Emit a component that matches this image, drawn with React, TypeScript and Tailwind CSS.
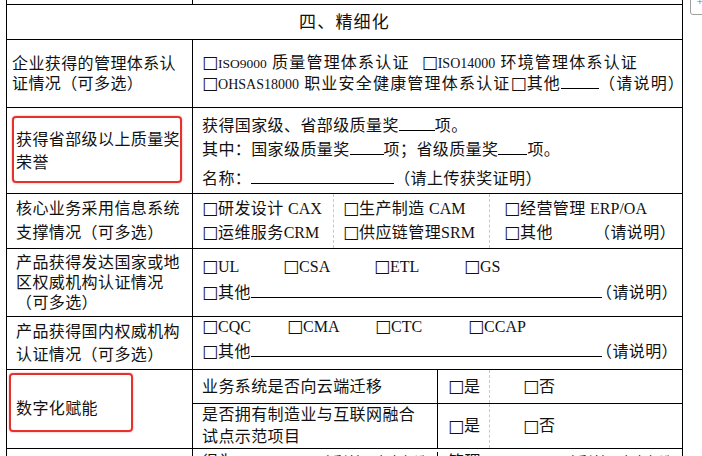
import React from "react";

const Box = () => (
  <span className="font-['DejaVu_Sans',sans-serif] text-[17px] leading-none tracking-normal">□</span>
);
const L = ({ children, className = "" }: { children: React.ReactNode; className?: string }) => (
  <span className={"tracking-normal " + className}>{children}</span>
);
const Blank = ({ className }: { className: string }) => (
  <span className={"inline-block border-b border-black align-baseline " + className} />
);
const RedBox = ({ className }: { className: string }) => (
  <div
    className={
      "pointer-events-none absolute rounded-[4px] border-2 border-[#e5322d] shadow-[0_0_2px_rgba(229,50,45,0.5)] " +
      className
    }
  />
);

export default function App() {
  return (
    <div className="relative h-[456px] w-[702px] overflow-hidden bg-white font-['Liberation_Serif','Noto_Sans_CJK_SC',serif] text-[16px] tracking-[0.4px] text-[#111]">
      <div className="ml-[6px] w-[677px] border-x border-black">
        {/* row0 */}
        <div className="flex h-[5px] border-b border-black">
          <div className="w-[186px] shrink-0 border-r border-black" />
        </div>
        {/* header */}
        <div className="flex h-[35px] items-center justify-center border-b border-black text-[17px] leading-none tracking-[1.2px]">
          四、精细化
        </div>
        {/* row1 */}
        <div className="flex h-[68px] border-b border-black">
          <div className="flex w-[186px] shrink-0 flex-col justify-center border-r border-black pl-[5px] leading-[20px]">
            <div>企业获得的管理体系认</div>
            <div>证情况（可多选）</div>
          </div>
          <div className="flex flex-1 flex-col justify-center whitespace-nowrap pl-[9px] leading-[20px] tracking-[1.2px]">
            <div>
              <Box />
              <L className="text-[13.5px]">ISO9000</L> 质量管理体系认证
              <span className="ml-[12px]">
                <Box />
              </span>
              <L className="text-[14px]">ISO14000</L> 环境管理体系认证
            </div>
            <div>
              <Box />
              <L className="text-[14px]">OHSAS18000</L> 职业安全健康管理体系认证
              <Box />
              其他
              <Blank className="w-[38px]" />
              （请说明）
            </div>
          </div>
        </div>
        {/* row2 */}
        <div className="flex h-[86px] border-b border-black">
          <div className="relative flex w-[186px] shrink-0 flex-col justify-center border-r border-black pl-[9px] leading-[23px]">
            <div>获得省部级以上质量奖</div>
            <div>荣誉</div>
            <RedBox className="left-[5px] top-[8px] h-[67px] w-[170px]" />
          </div>
          <div className="flex-1 whitespace-nowrap pl-[9px] pt-[6px] leading-[24px]">
            <div>
              获得国家级、省部级质量奖
              <Blank className="w-[36px]" />
              项。
            </div>
            <div>
              其中：国家级质量奖
              <Blank className="w-[34px]" />
              项；省级质量奖
              <Blank className="w-[29px]" />
              项。
            </div>
            <div className="mt-[5px]">
              名称：
              <Blank className="w-[143px]" />
              （请上传获奖证明）
            </div>
          </div>
        </div>
        {/* row3 */}
        <div className="flex h-[55px] border-b border-black">
          <div className="flex w-[186px] shrink-0 flex-col justify-center border-r border-black pl-[9px] leading-[24px]">
            <div>核心业务采用信息系统</div>
            <div>支撑情况（可多选）</div>
          </div>
          <div className="flex flex-1 whitespace-nowrap leading-[24px]">
            <div className="flex w-[141px] flex-col justify-center border-r border-dashed border-[#c8c8c8] pl-[9px]">
              <div>
                <Box />
                研发设计 <L>CAX</L>
              </div>
              <div>
                <Box />
                运维服务<L>CRM</L>
              </div>
            </div>
            <div className="flex w-[156px] flex-col justify-center border-r border-dashed border-[#c8c8c8] pl-[9px]">
              <div>
                <Box />
                生产制造 <L>CAM</L>
              </div>
              <div>
                <Box />
                供应链管理<L>SRM</L>
              </div>
            </div>
            <div className="flex flex-1 flex-col justify-center pl-[14px] pr-[6px]">
              <div>
                <Box />
                经营管理 <L>ERP/OA</L>
              </div>
              <div className="flex justify-between">
                <span>
                  <Box />
                  其他
                </span>
                <span>（请说明）</span>
              </div>
            </div>
          </div>
        </div>
        {/* row4 */}
        <div className="flex h-[68px] border-b border-black">
          <div className="flex w-[186px] shrink-0 flex-col justify-center border-r border-black pl-[9px] leading-[20px]">
            <div>产品获得发达国家或地</div>
            <div>区权威机构认证情况</div>
            <div>（可多选）</div>
          </div>
          <div className="flex-1 whitespace-nowrap pl-[9px] pr-[4px] pt-[5px] leading-[26px]">
            <div className="flex">
              <span className="w-[81px]">
                <Box />
                <L>UL</L>
              </span>
              <span className="w-[91px]">
                <Box />
                <L>CSA</L>
              </span>
              <span className="w-[90px]">
                <Box />
                <L>ETL</L>
              </span>
              <span>
                <Box />
                <L>GS</L>
              </span>
            </div>
            <div className="flex items-baseline">
              <span>
                <Box />
                其他
              </span>
              <span className="flex-1 self-stretch">
                <Blank className="w-full" />
              </span>
              <span className="-ml-[6px]">（请说明）</span>
            </div>
          </div>
        </div>
        {/* row5 */}
        <div className="flex h-[53px] border-b border-black">
          <div className="flex w-[186px] shrink-0 flex-col justify-center border-r border-black pl-[9px] leading-[23px]">
            <div>产品获得国内权威机构</div>
            <div>认证情况（可多选）</div>
          </div>
          <div className="flex-1 whitespace-nowrap pl-[9px] pr-[4px] leading-[20px]">
            <div className="flex">
              <span className="w-[85px]">
                <Box />
                <L>CQC</L>
              </span>
              <span className="w-[88px]">
                <Box />
                <L>CMA</L>
              </span>
              <span className="w-[93px]">
                <Box />
                <L>CTC</L>
              </span>
              <span>
                <Box />
                <L>CCAP</L>
              </span>
            </div>
            <div className="mt-[5px] flex items-baseline">
              <span>
                <Box />
                其他
              </span>
              <span className="flex-1 self-stretch">
                <Blank className="w-full" />
              </span>
              <span className="-ml-[6px]">（请说明）</span>
            </div>
          </div>
        </div>
        {/* row6 */}
        <div className="flex h-[79px] border-b border-black">
          <div className="relative flex w-[186px] shrink-0 items-center border-r border-black pl-[9px]">
            数字化赋能
            <RedBox className="left-[2px] top-[3px] h-[59px] w-[124px]" />
          </div>
          <div className="flex flex-1 flex-col whitespace-nowrap">
            <div className="flex h-[34px] border-b border-black">
              <div className="flex w-[245px] items-center border-r border-black pl-[9px]">
                业务系统是否向云端迁移
              </div>
              <div className="flex w-[52px] items-center border-r border-dashed border-[#c8c8c8] pl-[10px]">
                <Box />是
              </div>
              <div className="flex flex-1 items-center pl-[33px]">
                <Box />否
              </div>
            </div>
            <div className="flex flex-1">
              <div className="flex w-[245px] flex-col justify-center border-r border-black pl-[9px] leading-[22px]">
                <div>是否拥有制造业与互联网融合</div>
                <div>试点示范项目</div>
              </div>
              <div className="flex w-[52px] items-center border-r border-dashed border-[#c8c8c8] pl-[10px]">
                <Box />是
              </div>
              <div className="flex flex-1 items-center pl-[33px]">
                <Box />否
              </div>
            </div>
          </div>
        </div>
        {/* row7 (cut off) */}
        <div className="flex h-[30px]">
          <div className="w-[186px] shrink-0 border-r border-black" />
          <div className="flex flex-1 whitespace-nowrap pt-[3px] leading-[20px]">
            <div className="flex w-[245px] justify-between border-r border-black pl-[9px] pr-[4px]">
              <span>得为</span>
              <span className="text-[13px]">（手填）(点击勾选)</span>
            </div>
            <div className="flex flex-1 justify-between pl-[10px] pr-[4px]">
              <span>管理</span>
              <span className="text-[13px]">（手填）(点击勾选)</span>
            </div>
          </div>
        </div>
      </div>
      {/* table handle */}
      <div className="absolute left-[690px] top-[-6px] flex h-[21px] w-[20px] justify-center rounded-[3px] border border-[#a0a0a0] bg-white text-[12px] leading-[14px] text-[#777]">
        +
      </div>
    </div>
  );
}
